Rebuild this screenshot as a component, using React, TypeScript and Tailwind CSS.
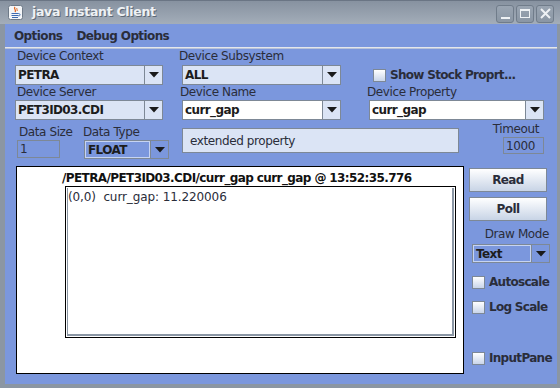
import React from "react";

const Arrow = () => (
  <svg width="10" height="6" viewBox="0 0 10 6">
    <path d="M0 0 L10 0 L5 5.5 Z" fill="#1a1a1a" />
  </svg>
);

function Combo({
  w,
  h,
  text,
  variant,
}: {
  w: string;
  h: string;
  text: string;
  variant: "light" | "white" | "blue";
}) {
  const field =
    variant === "light"
      ? "bg-[#dbe4f5]"
      : variant === "white"
      ? "bg-white"
      : "bg-[#7b97dd] border border-[#c6d4f2]";
  return (
    <div className={`${w} ${h} flex border border-[#7d8896] shrink-0`}>
      <div className={`flex-1 flex items-center pl-[2px] ${field} font-bold text-[12px] tracking-[-0.6px] text-[#1c1c1c]`}>
        {text}
      </div>
      <div className="w-[18px] flex items-center justify-center border-l border-[#7d8896] bg-[#dbe4f5]">
        {variant === "blue" ? (
          <div className="w-full h-full flex items-center justify-center bg-[#7b97dd]">
            <Arrow />
          </div>
        ) : (
          <Arrow />
        )}
      </div>
    </div>
  );
}

const Check = ({ label }: { label: string }) => (
  <div className="flex items-center gap-[4px]">
    <div className="w-[13px] h-[13px] border border-[#7d8896] bg-gradient-to-b from-white to-[#c9d5ea] shrink-0" />
    <span className="font-bold text-[12px] tracking-[-0.7px] text-[#2a2d3a] leading-[14px]">{label}</span>
  </div>
);

const TBtn = ({ children }: { children: React.ReactNode }) => (
  <div className="w-[18px] h-[18px] rounded-[3px] border border-[#707c8a] bg-gradient-to-b from-[#9aa5b2] to-[#8a96a4] flex items-center justify-center">
    {children}
  </div>
);

export default function App() {
  return (
    <div className="w-[560px] h-[388px] bg-[#5b6673] flex flex-col overflow-hidden whitespace-nowrap font-['DejaVu_Sans',sans-serif] text-[#222]">
      {/* title bar */}
      <div className="h-[24px] shrink-0 bg-gradient-to-b from-[#8792a0] to-[#a3adb9] border-t border-[#6a7584] flex items-center pl-[8px] pr-[6px]">
        <svg width="15" height="15" viewBox="0 0 15 15" className="shrink-0">
          <rect x="0.5" y="0.5" width="14" height="14" rx="2" fill="#f4f6f8" stroke="#6e7a88" />
          <path d="M7 2 C5 4 9 5 7 7" stroke="#e0641c" strokeWidth="1.3" fill="none" />
          <path d="M9 3 C8 4 10 5 9 6" stroke="#e0641c" strokeWidth="1" fill="none" />
          <path d="M3.5 8.5 H10.5 M3.5 10.5 H10.5 M4 12.5 H10" stroke="#3d6ab0" strokeWidth="1.1" />
          <path d="M10.5 8.5 C12.5 8.5 12.5 11 10.5 11" stroke="#3d6ab0" strokeWidth="1" fill="none" />
        </svg>
        <span className="ml-[9px] font-bold text-[12.5px] tracking-[-0.3px] text-[#eef1f4] [text-shadow:1px_1px_0_#5d6875]">
          java Instant Client
        </span>
        <div className="ml-auto flex gap-[2px] mt-[2px]">
          <TBtn>
            <div className="w-[9px] h-[2px] bg-[#eef1f4] mt-[8px]" />
          </TBtn>
          <TBtn>
            <div className="w-[10px] h-[9px] border-[1.5px] border-t-[2px] border-[#eef1f4]" />
          </TBtn>
          <TBtn>
            <svg width="11" height="11" viewBox="0 0 11 11">
              <path d="M1 1 L10 10 M10 1 L1 10" stroke="#eef1f4" strokeWidth="2" />
            </svg>
          </TBtn>
        </div>
      </div>

      {/* body */}
      <div className="flex-1 flex flex-col bg-[#7b97dd] border-l-[5px] border-r-[3px] border-b-[4px] border-[#8b96a3]">
        {/* menu */}
        <div className="h-[23px] shrink-0 flex items-center pl-[9px] gap-[14px] font-bold text-[12px] tracking-[-0.6px] text-[#2a2d3a]">
          <span>Options</span>
          <span>Debug Options</span>
        </div>
        <div className="h-[2px] shrink-0 bg-[#e4e7ec] border-b border-[#b8c2d8]" />

        <div className="text-[12px] tracking-[-0.4px] text-[#2a2d3a] leading-[14px]">
          {/* row A labels */}
          <div className="flex mt-[0px] pl-[10px] h-[14px]">
            <div className="w-[148px] pl-[2px]">Device Context</div>
            <div className="ml-[16px]">Device Subsystem</div>
          </div>
          {/* row B */}
          <div className="flex items-center pl-[10px] mt-[2px] h-[20px]">
            <Combo w="w-[148px]" h="h-[20px]" text="PETRA" variant="light" />
            <div className="ml-[19px]">
              <Combo w="w-[159px]" h="h-[20px]" text="ALL" variant="light" />
            </div>
            <div className="ml-[32px]">
              <Check label="Show Stock Proprt..." />
            </div>
          </div>
          {/* row C labels */}
          <div className="flex pl-[10px] h-[14px] mt-[0px]">
            <div className="w-[148px] pl-[2px]">Device Server</div>
            <div className="ml-[17px] w-[187px]">Device Name</div>
            <div>Device Property</div>
          </div>
          {/* row D */}
          <div className="flex pl-[10px] mt-[1px] h-[20px]">
            <Combo w="w-[148px]" h="h-[20px]" text="PET3ID03.CDI" variant="light" />
            <div className="ml-[19px]">
              <Combo w="w-[159px]" h="h-[20px]" text="curr_gap" variant="white" />
            </div>
            <div className="ml-[28px]">
              <Combo w="w-[175px]" h="h-[20px]" text="curr_gap" variant="white" />
            </div>
          </div>
          {/* row E */}
          <div className="flex items-start pl-[12px] h-[46px]">
            <div className="flex flex-col w-[43px] overflow-visible">
              <div className="mt-[5px] pl-[2px] w-[60px]">Data Size</div>
              <div className="mt-[1px] w-[43px] h-[18px] border border-[#7d8896] flex items-center pl-[2px]">1</div>
            </div>
            <div className="flex flex-col ml-[23px]">
              <div className="mt-[5px] pl-[0px]">Data Type</div>
              <div className="mt-[1px] ml-[1px]">
                <Combo w="w-[85px]" h="h-[19px]" text="FLOAT" variant="blue" />
              </div>
            </div>
            <div className="ml-[13px] mt-[8px] w-[277px] h-[25px] bg-[#dbe4f5] border border-[#7d8896] flex items-center pl-[7px]">
              extended property
            </div>
            <div className="flex flex-col items-end ml-[34px] w-[51px]">
              <div className="mt-[2px] pr-[5px]">Timeout</div>
              <div className="mt-[1px] w-[41px] h-[17px] border border-[#7d8896] flex items-center pl-[2px]">1000</div>
            </div>
          </div>
          {/* row F */}
          <div className="flex items-start pl-[11px] mt-[0px]">
            <div className="w-[448px] h-[208px] bg-white border border-black flex flex-col">
              <div className="pl-[45px] mt-[4px] h-[14px] font-bold tracking-[-0.6px] text-[#111]">
                /PETRA/PET3ID03.CDI/curr_gap curr_gap @ 13:52:35.776
              </div>
              <div className="ml-[48px] mt-[1px] w-[391px] h-[152px] border border-black p-[1px]">
                <div className="w-full h-full border-l border-t-0 border-r-2 border-b-2 border-[#8a96a4] border-l-[#8a96a4] pl-0 pt-[2px] tracking-[-0.1px]">
                  (0,0)&nbsp;&nbsp;curr_gap: 11.220006
                </div>
              </div>
            </div>
            <div className="ml-[5px] flex flex-col w-[82px]">
              <div className="mt-[2px] w-[78px] h-[24px] border border-[#7d8896] bg-gradient-to-b from-white to-[#c8d4e6] flex items-center justify-center font-bold tracking-[-0.6px] text-[#2a2d3a]">
                Read
              </div>
              <div className="mt-[5px] w-[78px] h-[24px] border border-[#7d8896] bg-gradient-to-b from-white to-[#c8d4e6] flex items-center justify-center font-bold tracking-[-0.6px] text-[#2a2d3a]">
                Poll
              </div>
              <div className="mt-[6px] text-right pr-[2px]">Draw Mode</div>
              <div className="mt-[3px] ml-[3px]">
                <Combo w="w-[78px]" h="h-[19px]" text="Text" variant="blue" />
              </div>
              <div className="mt-[12px] ml-[3px]">
                <Check label="Autoscale" />
              </div>
              <div className="mt-[11px] ml-[3px]">
                <Check label="Log Scale" />
              </div>
              <div className="mt-[37px] ml-[3px]">
                <Check label="InputPane" />
              </div>
            </div>
          </div>
        </div>
      </div>
    </div>
  );
}
